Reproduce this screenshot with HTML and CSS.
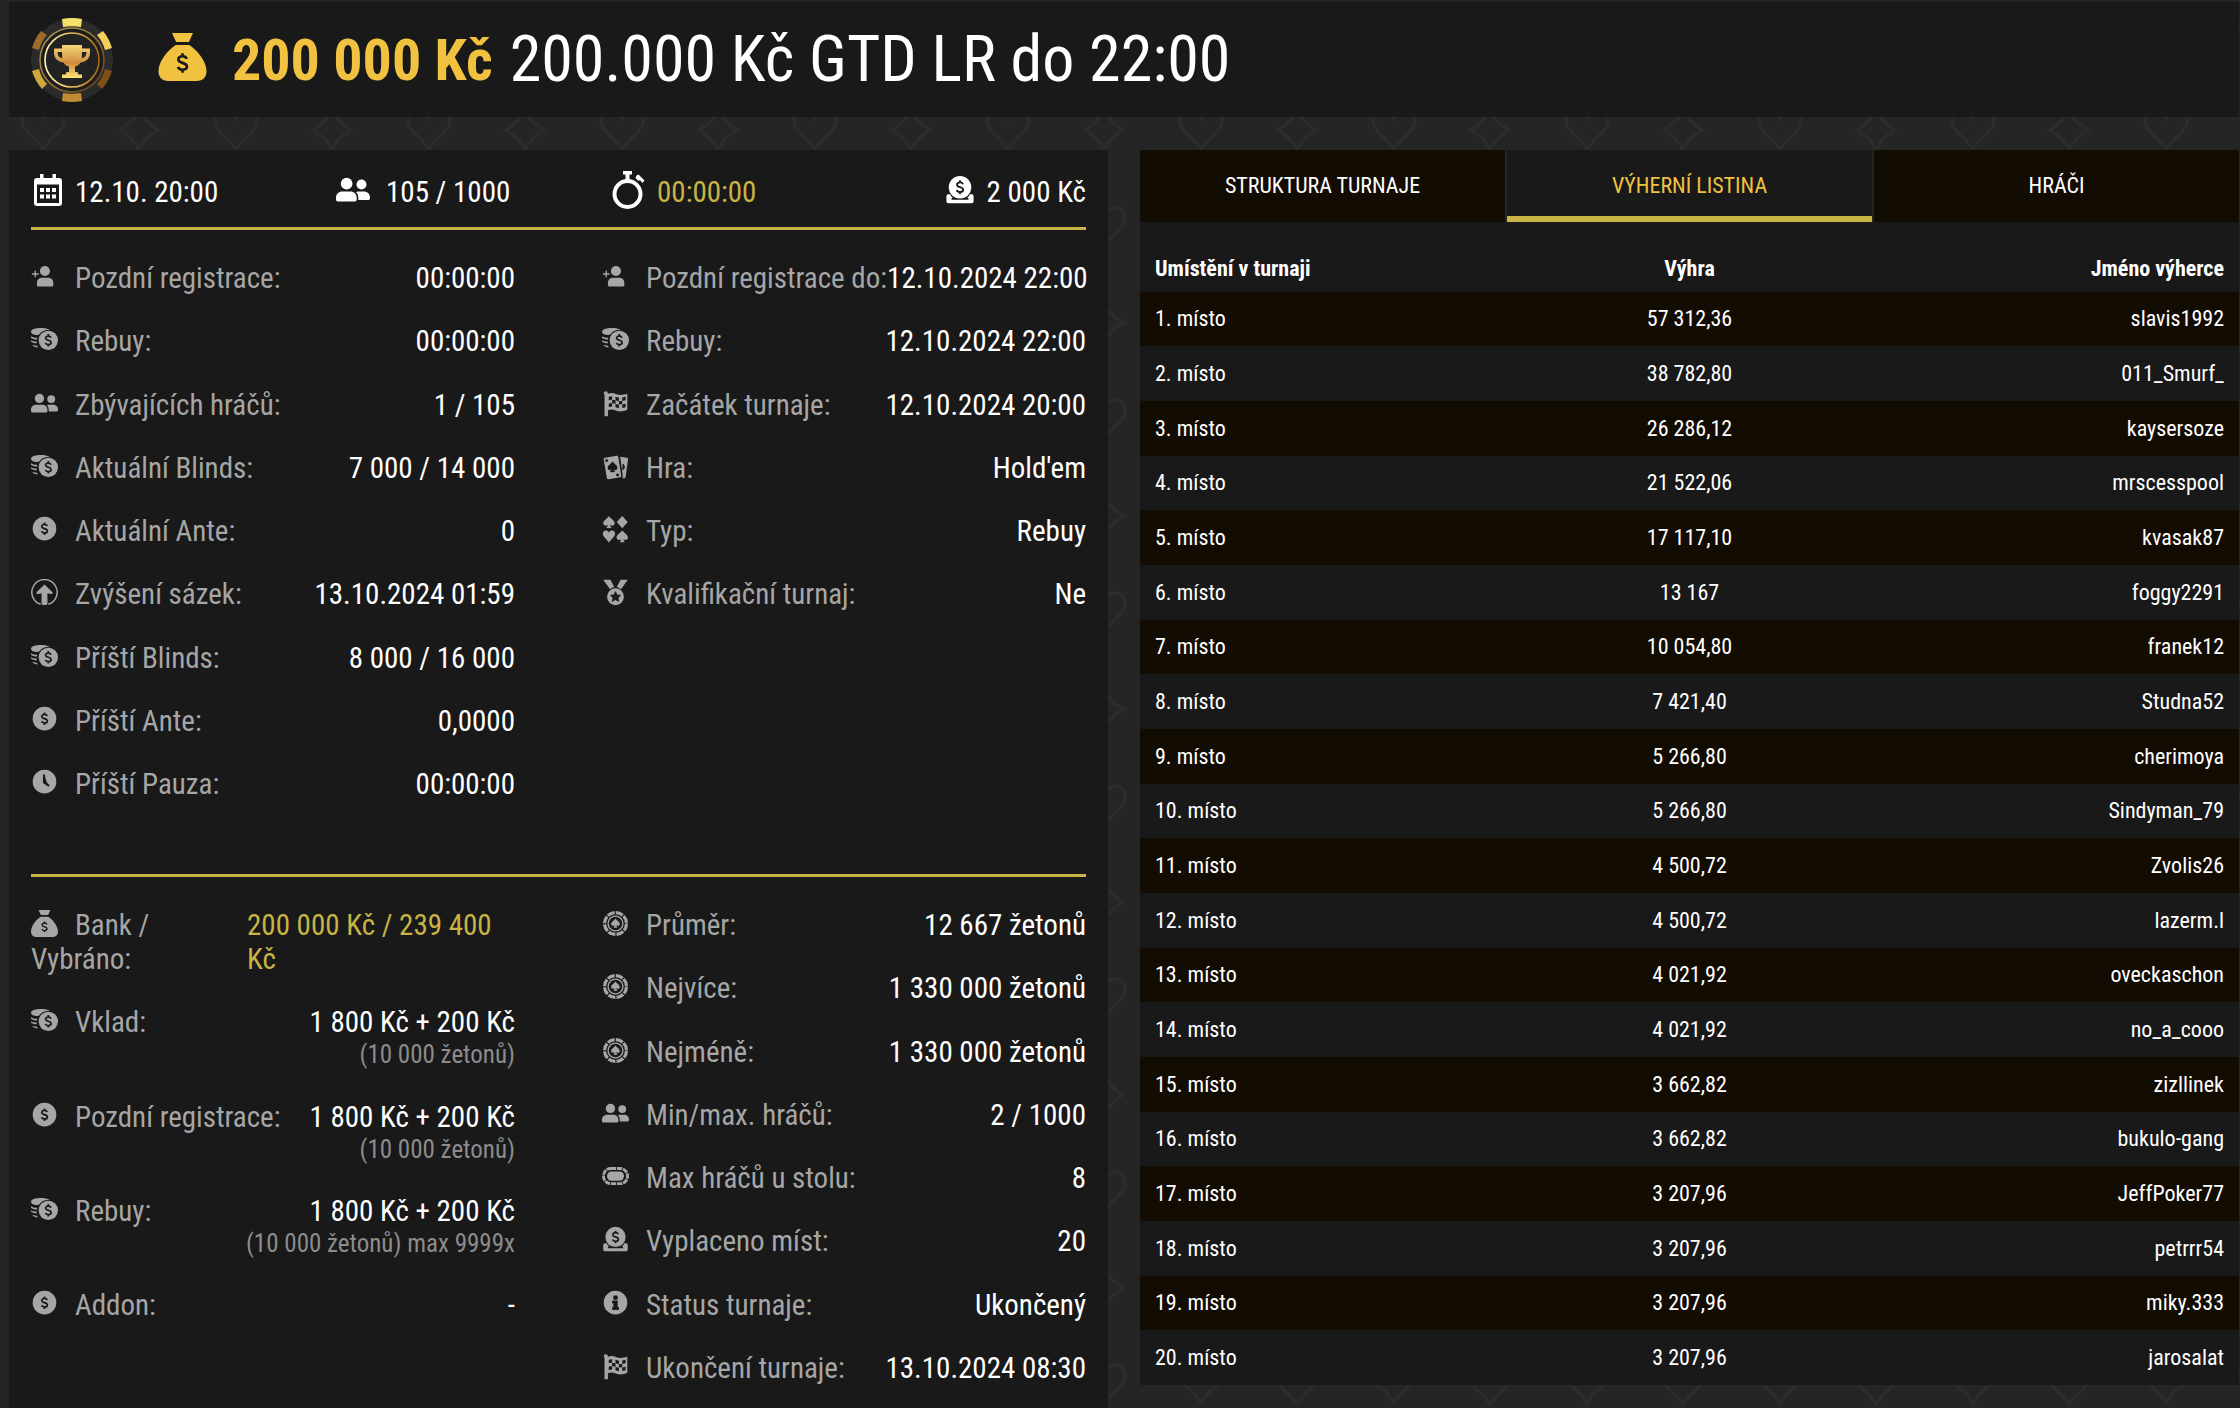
FILE: index.html
```html
<!DOCTYPE html>
<html lang="cs">
<head>
    <meta charset="UTF-8">
    <meta name="viewport" content="width=device-width, initial-scale=1.0">
    <title>200.000 Kč GTD LR do 22:00</title>
    <link rel="stylesheet" href="styles.css">
</head>
<body>

    <!-- Icon set -->
    <svg class="sprite" aria-hidden="true">
        <symbol id="dollar" viewBox="0 0 10 16">
            <path d="M8.2 4.8C7.8 3.5 6.600 2.900 5 2.900C3.100 2.900 1.800 3.800 1.800 5.300C1.800 8.600 8.400 7.200 8.400 10.700C8.400 12.200 7 13.100 5 13.100C3.200 13.100 1.900 12.400 1.500 11M5 .6V3M5 13V15.400" fill="none" stroke-width="2"/>
        </symbol>
        <symbol id="calendar" viewBox="0 0 28 32">
            <path fill-rule="evenodd" d="M6 0h3.500v4h9V0H22v4h3a3 3 0 0 1 3 3v22a3 3 0 0 1-3 3H3a3 3 0 0 1-3-3V7a3 3 0 0 1 3-3h3zM3 10.500V29h22V10.500zM6 14h4v4H6zm6 0h4v4h-4zm6 0h4v4h-4zM6 20.500h4v4H6zm6 0h4v4h-4zm6 0h4v4h-4z"/>
        </symbol>
        <symbol id="users" viewBox="0 0 32 32">
            <circle cx="10" cy="10" r="5.500"/>
            <circle cx="24" cy="10.800" r="4.700"/>
            <path d="M0 23.500C0 20 2.500 17.500 6 17.500h7.500c3.500 0 6 2.500 6 6V25a1.800 1.800 0 0 1-1.800 1.800H1.800A1.800 1.800 0 0 1 0 25zM21 25.500v-2.200c0-2-.8-4-2-5.300.8-.4 1.600-.5 2.500-.5h4.700c3.300 0 5.800 2.200 5.800 5.500v.8c0 1-.7 1.700-1.700 1.700z"/>
        </symbol>
        <symbol id="stopwatch" viewBox="0 0 32 38">
            <circle cx="15" cy="23" r="13" fill="none" stroke="currentColor" stroke-width="4"/>
            <path d="M10.500 0h9v3.500h-2.500V9h-4V3.500h-2.500zM24 4.500l2-1 6 6-2 2.500-2.500-3-1.500 1-3-3z"/>
        </symbol>
        <symbol id="payout" viewBox="0 0 32 32">
            <path d="M3.500 20.500h2c.5 1.500 1.500 2.800 3 4H7v2h18v-2h-1.500c1.500-1.200 2.500-2.500 3-4h2a2 2 0 0 1 2 2V28a2 2 0 0 1-2 2h-25a2 2 0 0 1-2-2v-5.500a2 2 0 0 1 2-2z"/>
            <circle cx="16" cy="13" r="12"/>
            <use href="#dollar" class="cut" x="11" y="5" width="10" height="16"/>
        </symbol>
        <symbol id="userplus" viewBox="0 0 32 32">
            <circle cx="16.500" cy="9.500" r="6"/>
            <path d="M7 24c0-4 2.500-6.500 6-6.500h7.500c3.500 0 6 2.500 6 6.500v2a1.800 1.800 0 0 1-1.800 1.800H8.800A1.800 1.800 0 0 1 7 26zM4.200 9h1.600v3.200H9v1.600H5.800V17H4.200v-3.200H1v-1.600h3.200z"/>
        </symbol>
        <symbol id="coins" viewBox="0 0 32 32">
            <path d="M0 6.500C1 3.500 6 2.500 11 2.500c5 0 9.500.7 11.500 2.500-6-.7-10.500 1.500-13 5.500C5 11 0 10 0 6.500zM0 12c2 1.300 4.500 1.800 7.500 1.900L7 16c-3-.2-5.700-.8-7-2.200zM0 16.800c2 1.200 4 1.600 6.800 1.700v2C4 20.300 1.200 19.600 0 18.300zM2 22.200c1.500.8 3.200 1.100 5.200 1.200l.8 2c-2.500-.2-5-.9-6-2.200z"/>
            <circle cx="20.500" cy="17" r="11.500"/>
            <use href="#dollar" class="cut" x="15.500" y="9" width="10" height="16"/>
        </symbol>
        <symbol id="coin" viewBox="0 0 32 32">
            <circle cx="16" cy="15" r="14"/>
            <use href="#dollar" class="cut" x="11" y="7" width="10" height="16"/>
        </symbol>
        <symbol id="raise" viewBox="0 0 32 32">
            <path d="M11.500 30A15 15 0 1 1 20.500 30" fill="none" stroke="currentColor" stroke-width="1.800"/>
            <path d="M16 6.500l9.200 8.800c1 1.200-.2 3-2 2.500L19.500 17v12c0 2.500-7 2.500-7 0V17l-3.700.8c-1.800.5-3-1.300-2-2.500z"/>
        </symbol>
        <symbol id="clock" viewBox="0 0 32 32">
            <circle cx="16" cy="15" r="14"/>
            <path class="cut" d="M15.500 7.500v8.500l5 3.500" fill="none" stroke-width="2.600" stroke-linecap="round"/>
        </symbol>
        <symbol id="flag" viewBox="0 0 32 32">
            <path fill-rule="evenodd" d="M2 4a2.500 2.500 0 1 1 5 0v.5c4-1.500 7-.8 10 .5 4 1.500 8 1 13-.5v19c-5 2-9 2.500-13 1-3.500-1.500-6.500-2-10-.5V31H3V5.500zM8 8v4l4-.7v-4zm8 0v4l4 1.200v-4zm8 1v4l4-1V8zM12 11.500v4l4 1v-4.300zm8 1.700v4l4-.4v-4zM8 16v4l4-.5v-4zm8 .5v4l4 1.200v-4.200zm8 .8v4l4-1v-4z"/>
        </symbol>
        <symbol id="spade" viewBox="0 0 16 16">
            <path d="M8 0c2 3.300 7.500 5.800 7.500 9.500 0 3-3.500 4.300-6 2.300.1 1.600.8 2.700 1.800 3.700v.5H4.700v-.5c1-1 1.700-2.100 1.800-3.700-2.500 2-6 .7-6-2.300C.5 5.800 6 3.300 8 0z"/>
        </symbol>
        <symbol id="cards" viewBox="0 0 32 32">
            <path d="M3.500 5.500l14-2.200c1-.1 1.700.4 1.800 1.300l3.500 22.500c.1.900-.3 1.500-1.300 1.700L7.700 31c-1 .1-1.800-.4-2-1.400L2 7.400c-.1-1 .5-1.800 1.500-1.900z"/>
            <path d="M21.500 4.500l8 1c1 .2 1.500.8 1.400 1.800L28 28.500c-.2 1-.9 1.600-2 1.500l-2-.2c.5-.7.800-1.400.7-2.300z"/>
            <use href="#spade" class="cut" x="6.500" y="10" width="12" height="13"/>
            <circle class="cut" cx="5.500" cy="9" r="1.300"/>
            <circle class="cut" cx="18.500" cy="26" r="1.300"/>
            <path class="cut" d="M25 13l2 4-2.500 3z"/>
        </symbol>
        <symbol id="suits" viewBox="0 0 32 32">
            <use href="#spade" x="1" y="0" width="14.500" height="14.500"/>
            <path d="M24 0l6.500 7.200L24 14.500l-6.500-7.300zM8.200 31.500C5 27 1 24.500 1 20.800c0-4 5.200-4.800 7.200-1.300 2-3.500 7.300-2.700 7.300 1.300 0 3.700-4 6.200-7.300 10.700z"/>
            <use href="#spade" x="16.500" y="17" width="15" height="14.500"/>
        </symbol>
        <symbol id="medal" viewBox="0 0 32 32">
            <path d="M1.500 1H10l4.500 8.500c-2 .5-3.500 1.300-5 2.500zM30.500 1H22l-4.500 8.500c2 .5 3.500 1.300 5 2.500z"/>
            <circle cx="16" cy="21" r="10"/>
            <path class="cut" d="M16 15l1.800 3.900 4.200.5-3.100 2.900.8 4.200-3.700-2.100-3.700 2.100.8-4.200-3.100-2.900 4.200-.5z"/>
        </symbol>
        <symbol id="bag" viewBox="0 0 32 32">
            <path d="M9 0h14l-2.700 6h-8.600zM11.500 8h9C26 11.500 32 19 32 25.500c0 4-2.500 6.500-6.500 6.500h-19C2.500 32 0 29.500 0 25.500 0 19 6 11.500 11.500 8z"/>
            <use href="#dollar" class="cut" x="11.500" y="13" width="9" height="14"/>
        </symbol>
        <symbol id="chip" viewBox="0 0 32 32">
            <circle cx="16" cy="16" r="13" fill="none" stroke="currentColor" stroke-width="3.800" stroke-dasharray="8.810 1.400"/>
            <circle cx="16" cy="16" r="8.800" fill="none" stroke="currentColor" stroke-width="1.600"/>
            <use href="#spade" x="10.500" y="9.500" width="11" height="12"/>
        </symbol>
        <symbol id="table" viewBox="0 0 32 32">
            <rect x="6" y="10" width="20" height="11" rx="5"/>
            <rect x="1.800" y="6.500" width="28.400" height="18" rx="8.500" fill="none" stroke="currentColor" stroke-width="3.400" stroke-dasharray="6.300 1"/>
        </symbol>
        <symbol id="info" viewBox="0 0 32 32">
            <circle cx="16" cy="15" r="14"/>
            <path class="cut" d="M14 7h4v4h-4zM12.500 13H18v7.500h1.500V23h-7v-2.500H14v-5h-1.500z"/>
        </symbol>
    </svg>

    <header class="title-bar">
        <svg class="logo" viewBox="0 0 82 84" role="img" aria-label="Turnaj">
            <defs>
                <linearGradient id="gold" x1="0" y1="0" x2="1" y2="1">
                    <stop offset="0" stop-color="#f9ee8a"/>
                    <stop offset=".55" stop-color="#d9a03f"/>
                    <stop offset="1" stop-color="#7a4a12"/>
                </linearGradient>
                <linearGradient id="cup" x1="0" y1="0" x2="0" y2="1">
                    <stop offset="0" stop-color="#f5d77c"/>
                    <stop offset=".55" stop-color="#d08c3c"/>
                    <stop offset="1" stop-color="#fbe67a"/>
                </linearGradient>
                <linearGradient id="ring" x1="0" y1="0" x2="1" y2="0">
                    <stop offset="0" stop-color="#fff8b8"/>
                    <stop offset=".6" stop-color="#e0b040"/>
                    <stop offset="1" stop-color="#a8660f"/>
                </linearGradient>
            </defs>
            <circle cx="41" cy="42" r="41" fill="#2b2b2b"/>
            <path fill="#f6e06a" d="M31 1q10-2 20 0l-1 8q-9-1.500-18 0z"/>
            <path fill="#f2cf5c" d="M66 17l6-4q6 7 9 17l-7 2q-2-8-8-15z"/>
            <path fill="#a06a2a" d="M16 17l-6-4q-6 7-9 17l7 2q2-8 8-15z"/>
            <path fill="#cfa63c" d="M1 53l7-2q2 9 8 15l-5 5Q4 63 1 53z"/>
            <path fill="#80501a" d="M81 53l-7-2q-2 9-8 15l5 5q7-8 10-18z"/>
            <path fill="#c08b33" d="M31 83q10 2 20 0l-1-8q-9 1.500-18 0z"/>
            <circle cx="41" cy="42" r="32" fill="#1d1d1d" stroke="url(#gold)" stroke-opacity=".6" stroke-width="1.500"/>
            <circle cx="41" cy="42" r="27" fill="#222" stroke="url(#ring)" stroke-width="1.600"/>
            <path fill="url(#cup)" fill-rule="evenodd" d="M31 27h20v3.500h8v4c0 6-4 9.500-9.500 10-1.500 2.500-3 3.500-5.500 4v5.500h2.500l1 2.500h3.500V60H31v-3.500h3.500l1-2.500H38v-5.500c-2.500-.5-4-1.500-5.500-4-5.500-.5-9.500-4-9.500-10v-4h8zm-4.500 7c0 3.500 1.500 5.500 4.700 6.300L31 34zM55.500 34L51 34l-.2 6.300c3.200-.8 4.700-2.800 4.700-6.300z"/>
        </svg>
        <svg class="bag"><use href="#bag"/></svg>
        <strong class="guarantee">200 000 Kč</strong>
        <h1>200.000 Kč GTD LR do 22:00</h1>
    </header>

    <main class="content">

        <!-- Tournament details -->
        <section class="panel">
            <div class="stats">
                <div class="stat"><svg class="stat-calendar"><use href="#calendar"/></svg>12.10. 20:00</div>
                <div class="stat"><svg class="stat-users"><use href="#users"/></svg>105 / 1000</div>
                <div class="stat stat-gold"><svg class="stat-watch"><use href="#stopwatch"/></svg>00:00:00</div>
                <div class="stat"><svg class="stat-payout"><use href="#payout"/></svg>2 000 Kč</div>
            </div>

            <div class="details">
                <dl class="list">
                    <div class="row"><dt><svg><use href="#userplus"/></svg>Pozdní registrace:</dt><dd>00:00:00</dd></div>
                    <div class="row"><dt><svg><use href="#coins"/></svg>Rebuy:</dt><dd>00:00:00</dd></div>
                    <div class="row"><dt><svg><use href="#users"/></svg>Zbývajících hráčů:</dt><dd>1 / 105</dd></div>
                    <div class="row"><dt><svg><use href="#coins"/></svg>Aktuální Blinds:</dt><dd>7 000 / 14 000</dd></div>
                    <div class="row"><dt><svg><use href="#coin"/></svg>Aktuální Ante:</dt><dd>0</dd></div>
                    <div class="row"><dt><svg><use href="#raise"/></svg>Zvýšení sázek:</dt><dd>13.10.2024 01:59</dd></div>
                    <div class="row"><dt><svg><use href="#coins"/></svg>Příští Blinds:</dt><dd>8 000 / 16 000</dd></div>
                    <div class="row"><dt><svg><use href="#coin"/></svg>Příští Ante:</dt><dd>0,0000</dd></div>
                    <div class="row"><dt><svg><use href="#clock"/></svg>Příští Pauza:</dt><dd>00:00:00</dd></div>
                </dl>
                <dl class="list">
                    <div class="row"><dt><svg><use href="#userplus"/></svg>Pozdní registrace do:</dt><dd>12.10.2024 22:00</dd></div>
                    <div class="row"><dt><svg><use href="#coins"/></svg>Rebuy:</dt><dd>12.10.2024 22:00</dd></div>
                    <div class="row"><dt><svg><use href="#flag"/></svg>Začátek turnaje:</dt><dd>12.10.2024 20:00</dd></div>
                    <div class="row"><dt><svg><use href="#cards"/></svg>Hra:</dt><dd>Hold'em</dd></div>
                    <div class="row"><dt><svg><use href="#suits"/></svg>Typ:</dt><dd>Rebuy</dd></div>
                    <div class="row"><dt><svg><use href="#medal"/></svg>Kvalifikační turnaj:</dt><dd>Ne</dd></div>
                </dl>
            </div>

            <div class="details">
                <dl class="list">
                    <div class="row row-bank"><dt><svg><use href="#bag"/></svg>Bank / Vybráno:</dt><dd>200 000 Kč / 239 400 Kč</dd></div>
                    <div class="row"><dt><svg><use href="#coins"/></svg>Vklad:</dt><dd>1 800 Kč + 200 Kč <small>(10 000 žetonů)</small></dd></div>
                    <div class="row"><dt><svg><use href="#coin"/></svg>Pozdní registrace:</dt><dd>1 800 Kč + 200 Kč <small>(10 000 žetonů)</small></dd></div>
                    <div class="row"><dt><svg><use href="#coins"/></svg>Rebuy:</dt><dd>1 800 Kč + 200 Kč <small>(10 000 žetonů) max 9999x</small></dd></div>
                    <div class="row"><dt><svg><use href="#coin"/></svg>Addon:</dt><dd>-</dd></div>
                </dl>
                <dl class="list">
                    <div class="row"><dt><svg><use href="#chip"/></svg>Průměr:</dt><dd>12 667 žetonů</dd></div>
                    <div class="row"><dt><svg><use href="#chip"/></svg>Nejvíce:</dt><dd>1 330 000 žetonů</dd></div>
                    <div class="row"><dt><svg><use href="#chip"/></svg>Nejméně:</dt><dd>1 330 000 žetonů</dd></div>
                    <div class="row"><dt><svg><use href="#users"/></svg>Min/max. hráčů:</dt><dd>2 / 1000</dd></div>
                    <div class="row"><dt><svg><use href="#table"/></svg>Max hráčů u stolu:</dt><dd>8</dd></div>
                    <div class="row"><dt><svg><use href="#payout"/></svg>Vyplaceno míst:</dt><dd>20</dd></div>
                    <div class="row"><dt><svg><use href="#info"/></svg>Status turnaje:</dt><dd>Ukončený</dd></div>
                    <div class="row"><dt><svg><use href="#flag"/></svg>Ukončení turnaje:</dt><dd>13.10.2024 08:30</dd></div>
                </dl>
            </div>
        </section>

        <!-- Payouts -->
        <section class="results">
            <div class="tabs">
                <button type="button" class="tab">STRUKTURA TURNAJE</button>
                <button type="button" class="tab active">VÝHERNÍ LISTINA</button>
                <button type="button" class="tab">HRÁČI</button>
            </div>
            <table>
                <thead>
                    <tr><th>Umístění v turnaji</th><th>Výhra</th><th>Jméno výherce</th></tr>
                </thead>
                <tbody>
                    <tr><td>1. místo</td><td>57 312,36</td><td>slavis1992</td></tr>
                    <tr><td>2. místo</td><td>38 782,80</td><td>011_Smurf_</td></tr>
                    <tr><td>3. místo</td><td>26 286,12</td><td>kaysersoze</td></tr>
                    <tr><td>4. místo</td><td>21 522,06</td><td>mrscesspool</td></tr>
                    <tr><td>5. místo</td><td>17 117,10</td><td>kvasak87</td></tr>
                    <tr><td>6. místo</td><td>13 167</td><td>foggy2291</td></tr>
                    <tr><td>7. místo</td><td>10 054,80</td><td>franek12</td></tr>
                    <tr><td>8. místo</td><td>7 421,40</td><td>Studna52</td></tr>
                    <tr><td>9. místo</td><td>5 266,80</td><td>cherimoya</td></tr>
                    <tr><td>10. místo</td><td>5 266,80</td><td>Sindyman_79</td></tr>
                    <tr><td>11. místo</td><td>4 500,72</td><td>Zvolis26</td></tr>
                    <tr><td>12. místo</td><td>4 500,72</td><td>lazerm.l</td></tr>
                    <tr><td>13. místo</td><td>4 021,92</td><td>oveckaschon</td></tr>
                    <tr><td>14. místo</td><td>4 021,92</td><td>no_a_cooo</td></tr>
                    <tr><td>15. místo</td><td>3 662,82</td><td>zizllinek</td></tr>
                    <tr><td>16. místo</td><td>3 662,82</td><td>bukulo-gang</td></tr>
                    <tr><td>17. místo</td><td>3 207,96</td><td>JeffPoker77</td></tr>
                    <tr><td>18. místo</td><td>3 207,96</td><td>petrrr54</td></tr>
                    <tr><td>19. místo</td><td>3 207,96</td><td>miky.333</td></tr>
                    <tr><td>20. místo</td><td>3 207,96</td><td>jarosalat</td></tr>
                </tbody>
            </table>
        </section>

    </main>

</body>
</html>
```
FILE: styles.css
```css
* {
    box-sizing: border-box;
}

body {
    font-family: "Roboto Condensed", Roboto, sans-serif;
    font-size: 29px;
    line-height: 34px;
    margin: 0;
    padding: 2px 1px 0 9px;
    color: #fff;
    background-color: #252525;
    /* faint card suits, repeated */
    background-image: url("data:image/svg+xml,%3Csvg xmlns='http://www.w3.org/2000/svg' xmlns:xlink='http://www.w3.org/1999/xlink' width='193' height='193' fill='none' stroke='%232c2c2c' stroke-width='3'%3E%3Cdefs%3E%3Cpath id='h' d='M0 20C-8 8-21 2-21-8C-21-22-4-22 0-11C4-22 21-22 21-8C21 2 8 8 0 20z'/%3E%3Cpath id='d' d='M0-19Q7-7 19 0Q7 7 0 19Q-7 7-19 0Q-7-7 0-19z'/%3E%3Cpath id='s' d='M0-20C6-8 21-4 21 7C21 17 8 18 3 11L7 20H-7L-3 11C-8 18-21 17-21 7C-21-4-6-8 0-20z'/%3E%3C/defs%3E%3Cuse xlink:href='%23h' x='43' y='129'/%3E%3Cuse xlink:href='%23h' x='139' y='33'/%3E%3Cuse xlink:href='%23d' x='139' y='130'/%3E%3Cuse xlink:href='%23d' x='43' y='33'/%3E%3Cuse xlink:href='%23s' x='91' y='81'/%3E%3Cuse xlink:href='%23s' x='91' y='177'/%3E%3C/svg%3E");
}

svg {
    fill: currentColor;
}

.sprite {
    position: absolute;
    width: 0;
    height: 0;
}

.cut {
    fill: #191919;
    stroke: #191919;
}

/* Title bar */
.title-bar {
    display: flex;
    align-items: center;
    height: 115px;
    padding: 0 22px;
    background-color: #191919;
}

.logo {
    width: 82px;
    height: 84px;
}

.bag {
    width: 49px;
    height: 48px;
    margin: 0 0 6px 45px;
    color: #f1c140;
}

.guarantee {
    margin: 0 17px 0 25px;
    font-size: 58px;
    font-weight: 700;
    line-height: 76px;
    color: #f1c140;
}

h1 {
    margin: 0;
    font-size: 64px;
    font-weight: 400;
    line-height: 76px;
}

.content {
    display: grid;
    grid-template-columns: minmax(0, 1fr) minmax(0, 1fr);
    gap: 32px;
    align-items: start;
    margin-top: 33px;
}

/* Details panel */
.panel {
    padding: 0 22px;
    background-color: #191919;
}

.stats {
    display: grid;
    grid-template-columns: 305fr 276fr 258fr 216fr;
    height: 77px;
}

.stat {
    display: flex;
    align-items: center;
    padding-top: 6px;
}

.stat:last-child {
    justify-content: flex-end;
}

.stat svg {
    margin-bottom: 3px;
    color: #fff;
}

.stat .stat-calendar {
    width: 34px;
    height: 32px;
    margin-right: 10px;
}

.stat .stat-users {
    width: 34px;
    height: 34px;
    margin-right: 16px;
}

.stat .stat-watch {
    width: 33px;
    height: 38px;
    margin-right: 12px;
}

.stat .stat-payout {
    width: 30px;
    height: 32px;
    margin-right: 12px;
}

.stat-gold {
    color: #c8b445;
}

.details {
    display: grid;
    grid-template-columns: minmax(0, 1fr) minmax(0, 1fr);
    gap: 87px;
    padding: 31px 0 44px;
    border-top: 3px solid #c8b445;
}

.details:last-child {
    padding-bottom: 0;
}

.list {
    margin: 0;
}

.row {
    display: flex;
    justify-content: space-between;
    padding-bottom: 29px;
}

.row:nth-child(4n+2) {
    padding-bottom: 30px;
}

dt {
    color: #a6a6a6;
    white-space: nowrap;
}

dt svg {
    width: 27px;
    height: 27px;
    margin-right: 17px;
    vertical-align: -2px;
}

dd {
    margin: 0;
    text-align: right;
    white-space: nowrap;
}

dd small {
    display: block;
    font-size: 25px;
    line-height: 31px;
    color: #8c8c8c;
}

.row-bank dt,
.row-bank dd {
    white-space: normal;
}

.row-bank dd {
    flex: 0 0 268px;
    text-align: left;
    color: #c8b445;
}

.row-bank dt {
    flex: 0 0 180px;
}

/* Payout table */
.results {
    background-color: #191919;
}

.tabs {
    display: grid;
    grid-template-columns: 1fr 1fr 1fr;
    gap: 2px;
    background-color: #252525;
}

.tab {
    height: 72px;
    padding: 0 0 2px;
    border: none;
    font-family: inherit;
    font-size: 22px;
    color: #fff;
    background-color: #130c03;
    cursor: pointer;
}

.tab.active {
    color: #f1c140;
    background-color: #191919;
    box-shadow: inset 0 -6px #c8b445;
}

table {
    width: 100%;
    margin-top: 24px;
    border-collapse: collapse;
    table-layout: fixed;
    font-size: 22px;
    line-height: 26px;
}

th,
td {
    padding: 0 15px;
    text-align: center;
}

th:first-child,
td:first-child {
    text-align: left;
}

th:last-child,
td:last-child {
    text-align: right;
}

thead tr {
    height: 46px;
}

tbody tr {
    height: 55px;
}

tbody tr:nth-child(3n+1) {
    height: 54px;
}

tbody tr:nth-child(odd) {
    background-color: #130c03;
}
```
